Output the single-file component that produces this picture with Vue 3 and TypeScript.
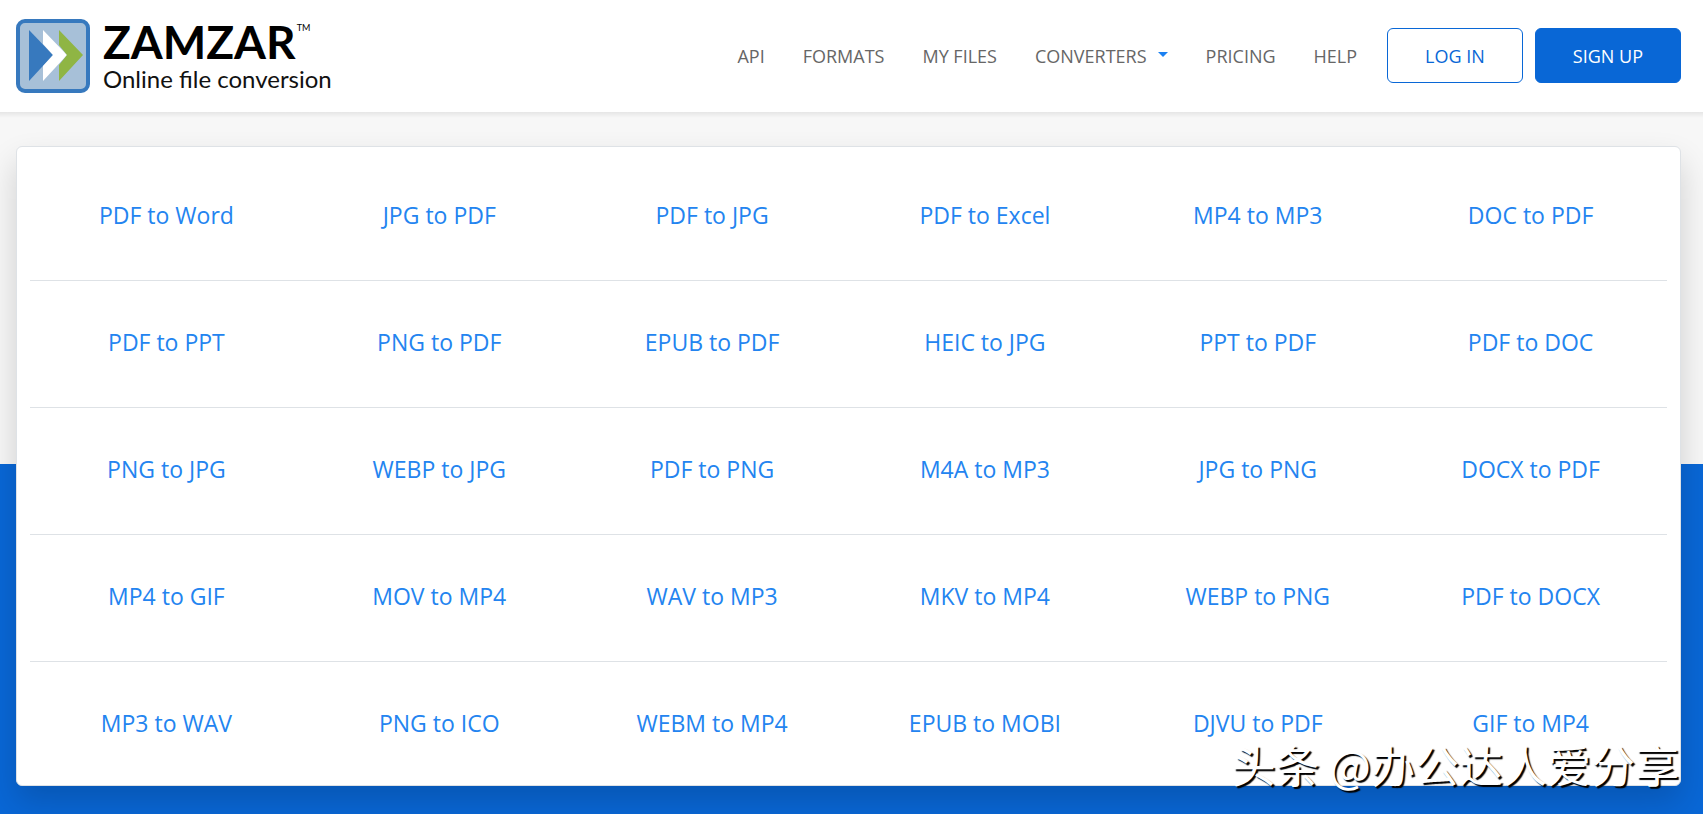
<script setup lang="ts">
interface NavItem {
  label: string
  dropdown?: boolean
}

const navItems: NavItem[] = [
  { label: 'API' },
  { label: 'FORMATS' },
  { label: 'MY FILES' },
  { label: 'CONVERTERS', dropdown: true },
  { label: 'PRICING' },
  { label: 'HELP' },
]

const rows: string[][] = [
  ['PDF to Word', 'JPG to PDF', 'PDF to JPG', 'PDF to Excel', 'MP4 to MP3', 'DOC to PDF'],
  ['PDF to PPT', 'PNG to PDF', 'EPUB to PDF', 'HEIC to JPG', 'PPT to PDF', 'PDF to DOC'],
  ['PNG to JPG', 'WEBP to JPG', 'PDF to PNG', 'M4A to MP3', 'JPG to PNG', 'DOCX to PDF'],
  ['MP4 to GIF', 'MOV to MP4', 'WAV to MP3', 'MKV to MP4', 'WEBP to PNG', 'PDF to DOCX'],
  ['MP3 to WAV', 'PNG to ICO', 'WEBM to MP4', 'EPUB to MOBI', 'DJVU to PDF', 'GIF to MP4'],
]
</script>

<template>
  <div class="page">
    <header class="header">
      <a class="brand" href="#">
        <svg class="brand-icon" viewBox="0 0 74 74" aria-hidden="true">
          <rect x="2" y="2" width="70" height="70" rx="7" fill="#a7c0d8" stroke="#3779be" stroke-width="4" />
          <path d="M13 11 L37 36 L13 62 Z" fill="#3779be" />
          <path d="M27 11 L51 36 L27 62 V47 L37 36 L27 25 Z" fill="#fff" />
          <path d="M43 11 L67 36 L43 62 V46 L51 36 L43 26 Z" fill="#8fb544" />
        </svg>
        <span class="brand-text">
          <span class="brand-name">ZAMZAR<span class="brand-tm">TM</span></span>
          <span class="brand-tag">Online file conversion</span>
        </span>
      </a>
      <nav class="nav">
        <a v-for="item in navItems" :key="item.label" class="nav-link" href="#">
          {{ item.label }}<span v-if="item.dropdown" class="caret"></span>
        </a>
      </nav>
      <div class="actions">
        <button class="btn btn-outline" type="button">LOG IN</button>
        <button class="btn btn-solid" type="button">SIGN UP</button>
      </div>
    </header>

    <main class="main">
      <section class="card">
        <div v-for="(row, i) in rows" :key="i" class="row">
          <a v-for="label in row" :key="label" class="conversion" href="#">{{ label }}</a>
        </div>
      </section>
    </main>

    <div class="watermark">头条 @办公达人爱分享</div>
  </div>
</template>

<style>
body {
  margin: 0;
}
</style>

<style scoped>
.page {
  position: relative;
  display: flex;
  flex-direction: column;
  min-height: 100vh;
  font-family: "Segoe UI", "Open Sans", "Noto Sans", sans-serif;
}

.page * {
  box-sizing: border-box;
}

.header {
  display: flex;
  align-items: center;
  height: 112px;
  padding: 0 22px 1px 16px;
  background: #fff;
}

.brand {
  display: flex;
  align-items: center;
  gap: 13px;
  color: #000;
  text-decoration: none;
}

.brand-icon {
  width: 74px;
  height: 74px;
}

.brand-text {
  display: flex;
  flex-direction: column;
  font-family: "Trebuchet MS", Lato, sans-serif;
}

.brand-name {
  display: flex;
  font-size: 46px;
  font-weight: 700;
  line-height: 46px;
}

.brand-tm {
  margin-left: 1px;
  font-size: 9px;
  font-weight: 400;
  line-height: 18px;
}

.brand-tag {
  font-size: 24px;
  line-height: 28px;
  color: #111;
}

.nav {
  display: flex;
  gap: 38px;
  margin-left: auto;
}

.nav-link {
  display: flex;
  align-items: center;
  font-size: 18px;
  line-height: 28px;
  color: #666;
  text-decoration: none;
}

.caret {
  margin: -3px 0 0 11px;
  border: 5px solid transparent;
  border-top-color: #1b81f2;
  border-bottom: 0;
}

.actions {
  display: flex;
  gap: 12px;
  margin-left: 30px;
}

.btn {
  height: 55px;
  padding: 0 37px;
  border: 1px solid #0967d6;
  border-radius: 6px;
  font-family: inherit;
  font-size: 18px;
  line-height: 28px;
}

.btn-outline {
  background: #fff;
  color: #0967d6;
}

.btn-solid {
  background: #0967d6;
  color: #fff;
}

.main {
  flex: 1;
  padding: 34px 22px 28px 16px;
  background:
    linear-gradient(rgba(0, 0, 0, 0.07), transparent 6px),
    linear-gradient(#f7f7f7 352px, #0967d6 352px);
}

.card {
  padding: 7px 13px 0;
  border: 1px solid #dee2e6;
  border-radius: 6px;
  background: #fff;
  box-shadow: 0 16px 32px rgba(0, 0, 0, 0.16);
}

.row {
  display: grid;
  grid-template-columns: repeat(6, 1fr);
  padding: 45px 0 49px;
  border-bottom: 1px solid #dee2e6;
}

.row:last-child {
  padding-bottom: 46px;
  border-bottom: 0;
}

.conversion {
  font-size: 23px;
  line-height: 32px;
  text-align: center;
  color: #2384f0;
  text-decoration: none;
}

.watermark {
  position: absolute;
  right: 24px;
  bottom: 28px;
  font-family: "Noto Sans CJK SC", sans-serif;
  font-size: 44px;
  line-height: 44px;
  color: #fff;
  text-shadow: 2px 2px 1px #000;
  pointer-events: none;
}
</style>
